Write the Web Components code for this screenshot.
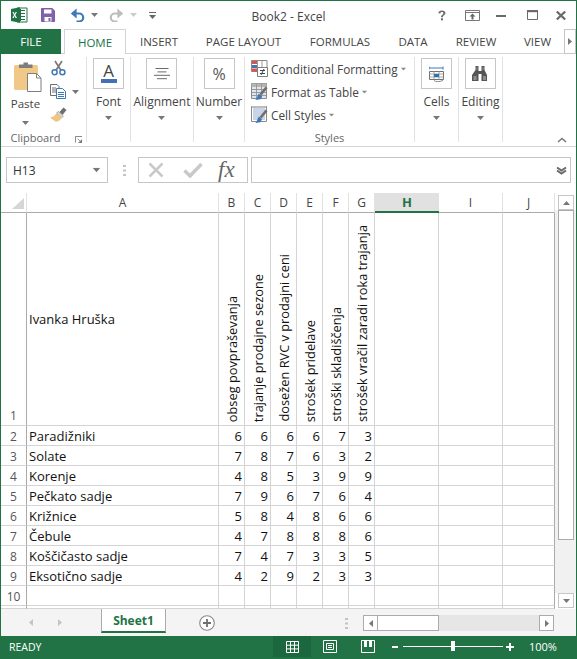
<!DOCTYPE html>
<html>
<head>
<meta charset="utf-8">
<title>Book2 - Excel</title>
<style>
  html, body { margin: 0; padding: 0; background: #fff; }
</style>
</head>
<body>
<xl-window>
  <xl-titlebar title="Book2 - Excel"></xl-titlebar>
  <xl-tabs></xl-tabs>
  <xl-ribbon></xl-ribbon>
  <xl-formula-bar cell="H13"></xl-formula-bar>
  <xl-sheet></xl-sheet>
  <xl-sheet-tabs sheet="Sheet1"></xl-sheet-tabs>
  <xl-status text="READY" zoom="100%"></xl-status>
</xl-window>

<script>
const FONT = '"Open Sans", "Liberation Sans", sans-serif';
const GREEN = '#217346';

// [width, height, svg body, optional viewBox when the icon is drawn scaled]
const ICONS = {
  excel: [17, 16, `<path d="M6 1h10v14H6z" fill="#fff" stroke="#217346"/><path d="M10 3.5h4M10 6.5h4M10 9.5h4M10 12.5h4M9.5 2v12" stroke="#217346"/><path d="M0 2l9-1.8v15.6L0 14z" fill="#217346"/><path d="M2.6 5l1 2 1-2h1.3L4.3 8l1.7 3H4.6l-1-2-1 2H1.3L3 8 1.4 5z" fill="#fff"/>`],
  save: [14, 14, `<path d="M.5.5h10.7l2.3 2.3v10.7H.5z" fill="#8064a9" stroke="#7a5ea6"/><path d="M3 1.5h7.5v4H3z" fill="#fff"/><path d="M3.5 9h7v4.5h-7z" fill="#fff"/><path d="M7.5 10h2v3h-2z" fill="#8064a9"/>`],
  undo: [15, 14, `<path d="M2.5 5.5h6.7a4 4 0 0 1 0 8H6.5" fill="none" stroke="#3f79b9" stroke-width="2.2"/><path d="M6.6.6v9.8L0.8 5.5z" fill="#3f79b9"/>`],
  redo: [15, 14, `<path d="M12.5 5.5H5.8a4 4 0 0 0 0 8h2.7" fill="none" stroke="#bdbdbd" stroke-width="2.2"/><path d="M8.4.6v9.8l5.8-4.9z" fill="#bdbdbd"/>`],
  qat: [7, 9, `<path d="M0 1.5h7" stroke="#666"/><path d="M0 4h7L3.5 8z" fill="#666"/>`],
  caret: [7, 4, `<path d="M0 0h7L3.5 4z" fill="currentColor"/>`],
  help: [8, 11, `<path d="M1.500 4.200C1.500 2.200 3.200 1 5.600 1c2.600 0 4.200 1.200 4.200 3.100 0 2.600-3 2.500-3 5H4.600c0-3.100 2.800-3 2.800-4.900 0-.9-.7-1.400-1.800-1.400-1.200 0-1.800.7-1.800 1.700z" fill="#6a6a6a"/><rect x="4.500" y="10.300" width="2.400" height="2.500" fill="#6a6a6a"/>`, '1 1 9.500 12'],
  display: [15, 11, `<path d="M.5.500h14v10H.5z" fill="#fff" stroke="#777"/><path d="M1 2.500h13" stroke="#777"/><path d="M7.500 3.500l3 3H8.500v3h-2v-3h-2z" fill="#666"/>`],
  min: [10, 3, `<rect width="10" height="2" y="1" fill="#6a6a6a"/>`],
  max: [11, 10, `<path d="M.5.500h10v9H.5z" fill="none" stroke="#6a6a6a"/><path d="M0 0h11v2.200H0z" fill="#6a6a6a"/>`],
  close: [10, 9, `<path d="M.800.500l8.400 8M9.200.500L.800 8.500" stroke="#6a6a6a" stroke-width="2.200"/>`],
  right: [4, 7, `<path d="M0 0l4 3.500L0 7z" fill="currentColor"/>`],
  left: [4, 7, `<path d="M4 0L0 3.500 4 7z" fill="currentColor"/>`],
  paste: [29, 31, `<rect x="1" y="4" width="24" height="25" rx="1.500" fill="#f0c988"/><path d="M6 7V3.500h4.500V1.500h4.500v2h4.500V7z" fill="#7d7d7d"/><path d="M14.500 12.500h9l4.500 4.500v13.500H14.500z" fill="#fff" stroke="#7f7f7f"/><path d="M23.500 12.500V17H28" fill="none" stroke="#7f7f7f"/>`],
  cut: [15, 16, `<path d="M4 1l5.800 9M11 1L5.200 10" stroke="#7a7a7a" stroke-width="1.700"/><circle cx="3.600" cy="12.300" r="2.500" fill="#fff" stroke="#3e78b8" stroke-width="1.500"/><circle cx="11.400" cy="12.300" r="2.500" fill="#fff" stroke="#3e78b8" stroke-width="1.500"/>`],
  copy: [16, 15, `<path d="M.5.500h6.500l2 2v9H.500z" fill="#fff" stroke="#6f6f6f"/><path d="M2 4h4M2 6h4M2 8h4" stroke="#6f6f6f"/><path d="M6.500 4.500h6l3 3v7h-9z" fill="#fff" stroke="#3e78b8"/><path d="M8 8.500h6M8 10.500h6M8 12.500h6" stroke="#3e78b8"/>`],
  brush: [17, 15, `<path d="M9.500 5l4-4.500 3 2.500-4 5z" fill="#6f6f6f"/><path d="M8.200 4.300l5.200 4.700-1.500 1.800-5.300-4.700z" fill="#d9d9d9" stroke="#8a8a8a" stroke-width=".6"/><path d="M6.600 6l5.300 4.800c-1.500 2.500-4 3.900-6.200 3.900L0 10.500C2.700 10.300 5 8.600 6.600 6z" fill="#efc580"/>`],
  launcher: [7, 7, `<path d="M.5 3V.5H7M.5.500v6" fill="none" stroke="#8a8a8a"/><path d="M7 7H3.500L7 3.500z M2.500 2.500L5 5" fill="#777" stroke="#777" stroke-width=".7"/>`],
  align: [16, 12, `<path d="M1.500.500h13M3.500 3.900h9M0 7.300h16M3 10.700h10" stroke="#6a6a6a"/>`],
  cond: [17, 17, `<path d="M.500.500h15.500v11H.500z" fill="#fff" stroke="#8a8a8a"/><path d="M1 1h5v3H1z" fill="#d9534f"/><path d="M1 5h5v3H1z" fill="#3e78b8"/><path d="M1 8.500h5v3H1z" fill="#d9534f"/><path d="M6.500 1v10.500M11 1v10" stroke="#9a9a9a"/><path d="M6.500 7.500h10v9h-10z" fill="#fff" stroke="#7f7f7f"/><path d="M9 10.500h5M9 13.500h5M13 9l-3 6" stroke="#444"/>`],
  format: [17, 17, `<path d="M.500.500h15v15H.500z" fill="#fff" stroke="#8a8a8a"/><path d="M.500.500h15v3.500H.500z" fill="#b5b5b5"/><path d="M1 4h14v11H1z" fill="#dfe6f0"/><path d="M5.500 1v14M10.500 1v14M1 6.500h14M1 9.500h14M1 12.500h14" stroke="#9a9a9a"/><path d="M8.500 11l6-7.500 2 1.700-6 7.300z" fill="#6f6f6f"/><path d="M7.800 10.500l3.200 3-1.600 2.800-5 .700c1.900-2 2-4.300 3.400-6.500z" fill="#3e78b8"/>`],
  styles: [17, 17, `<path d="M.500.500h15v15H.500z" fill="#fff" stroke="#8a8a8a"/><path d="M2 2h12v12H2z" fill="#c9d5e6"/><path d="M1 1h14" stroke="#bdbdbd" stroke-width="2"/><path d="M8.500 11l6-7.500 2 1.700-6 7.300z" fill="#6f6f6f"/><path d="M7.800 10.500l3.200 3-1.600 2.800-5 .700c1.900-2 2-4.300 3.400-6.500z" fill="#3e78b8"/>`],
  cells: [16, 16, `<path d="M0 .5v3M14 .5v3M0 2h14" stroke="#3e78b8"/><path d="M.500 5.500h14v8H.500z" fill="#fff" stroke="#6f6f6f"/><path d="M5 5.500v8M10 5.500v8M.500 8h14M.500 11h14" stroke="#a5a5a5"/><rect x="5" y="8" width="5" height="3" fill="#2b6fb5"/><path d="M5 14.500c2 1.500 5 1.500 9 0" fill="none" stroke="#8a8a8a"/>`],
  find: [16, 15, `<path d="M3.500 0h3v5h3V0h3v4l2.500 5v6H9.500V8h-3v7H0V9l3.500-5z" fill="#555"/><path d="M1.500 10h3v4h-3zM11 10h3v4h-3z" fill="#8d8d8d"/><path d="M4.500 1h1v3h-1zM10.500 1h1v3h-1z" fill="#8d8d8d"/>`],
  cancel: [16, 16, `<path d="M1.500 1.500l13 13M14.500 1.500l-13 13" stroke="#c9c9c9" stroke-width="2.500"/>`],
  enter: [20, 16, `<path d="M1.500 8.500l5.500 5.500L18.500 2" fill="none" stroke="#c9c9c9" stroke-width="3.500"/>`],
  chevrons: [11, 9, `<path d="M1 1.500l4.500 3 4.500-3M1 4.500l4.500 3 4.500-3" fill="none" stroke="#6a6a6a" stroke-width="2"/>`],
  plus: [16, 16, `<circle cx="8" cy="8" r="7.300" fill="#fff" stroke="#8a8a8a" stroke-width="1.100"/><path d="M8 4v8M4 8h8" stroke="#6f6f6f" stroke-width="1.800"/>`],
  dots: [3, 11, `<path d="M0 0h3v2H0zM0 4.500h3v2H0zM0 9h3v2H0z" fill="#c4c4c4"/>`],
  collapse: [10, 6, `<path d="M1 5l4-3.500L9 5" fill="none" stroke="#777" stroke-width="1.500"/>`],
  normal: [13, 12, `<path d="M.5.500h12v11H.5zM.5 4.200h12M.5 7.900h12M4.500.500v11M8.500.500v11" fill="none" stroke="#fff"/>`],
  layout: [14, 13, `<path d="M.5.500h13v12H.5z" fill="none" stroke="#fff"/><path d="M3.500 3.500h7v6h-7zM5 5.500h4M5 7.500h4" fill="none" stroke="#fff"/>`],
  breaks: [14, 13, `<path d="M.5.500h13v12H.5z" fill="none" stroke="#fff"/><path d="M3 0h3v7H3zM8 0h3v7H8z" fill="#fff"/>`],
  minus: [6, 2, `<rect width="6" height="2" fill="#fff"/>`],
  zplus: [8, 8, `<path d="M0 3h8v2H0zM3 0h2v8H3z" fill="#fff"/>`]
};

class XlIcon extends HTMLElement {
  connectedCallback() {
    const [w, h, body, vb] = ICONS[this.getAttribute('name')];
    this.attachShadow({ mode: 'open' }).innerHTML = `
      <style>:host { display: block; flex: none; line-height: 0; } svg { display: block; }</style>
      <svg width="${w}" height="${h}" viewBox="${vb || `0 0 ${w} ${h}`}">${body}</svg>`;
  }
}

class XlWindow extends HTMLElement {
  connectedCallback() {
    this.attachShadow({ mode: 'open' }).innerHTML = `
      <style>
        :host {
          display: flex; flex-direction: column;
          width: 577px; height: 659px; box-sizing: border-box;
          border: 1px solid ${GREEN}; border-bottom: none;
          font-family: ${FONT}; color: #444; background: #fff; overflow: hidden;
        }
      </style>
      <slot></slot>`;
  }
}

class XlTitlebar extends HTMLElement {
  connectedCallback() {
    this.attachShadow({ mode: 'open' }).innerHTML = `
      <style>
        :host { display: grid; grid-template-columns: 1fr auto 1fr; align-items: center; height: 28px; flex: none; }
        .left, .right { display: flex; align-items: center; }
        .left { padding-left: 10px; }
        .right { justify-content: flex-end; }
        .title { font-size: 12px; color: #444; margin-top: 2px; }
        .caret { color: #777; }
      </style>
      <div class="left">
        <xl-icon name="excel"></xl-icon>
        <xl-icon name="save" style="margin-left:13px"></xl-icon>
        <xl-icon name="undo" style="margin-left:15px"></xl-icon>
        <xl-icon class="caret" name="caret" style="margin-left:6px"></xl-icon>
        <xl-icon name="redo" style="margin-left:11px"></xl-icon>
        <xl-icon class="caret" name="caret" style="margin-left:6px;color:#ccc"></xl-icon>
        <xl-icon name="qat" style="margin-left:12px"></xl-icon>
      </div>
      <div class="title">${this.getAttribute('title')}</div>
      <div class="right">
        <xl-icon name="help"></xl-icon>
        <xl-icon name="display" style="margin-left:19px"></xl-icon>
        <xl-icon name="min" style="margin-left:16px"></xl-icon>
        <xl-icon name="max" style="margin-left:21px"></xl-icon>
        <xl-icon name="close" style="margin-left:18px;margin-right:10px"></xl-icon>
      </div>`;
  }
}

class XlTabs extends HTMLElement {
  connectedCallback() {
    const tabs = [['INSERT', 66], ['PAGE LAYOUT', 103], ['FORMULAS', 90], ['DATA', 56], ['REVIEW', 70], ['VIEW', 53]];
    this.attachShadow({ mode: 'open' }).innerHTML = `
      <style>
        :host {
          display: flex; height: 25px; flex: none; box-sizing: border-box;
          border-bottom: 1px solid #d4d4d4; font-size: 11.5px; color: #444;
        }
        div { display: flex; align-items: center; justify-content: center; box-sizing: border-box; height: 24px; white-space: nowrap; }
        .file { width: 60px; background: ${GREEN}; color: #fff; height: 25px; margin-bottom: -1px; margin-right: 3px; }
        .home {
          width: 62px; height: 25px; color: ${GREEN}; background: #fff; position: relative;
          border: 1px solid #d4d4d4; border-bottom: none;
        }
        .more {
          width: 12px; height: 25px; border: 1px solid #c6c6c6; color: #777;
        }
      </style>
      <div class="file">FILE</div>
      <div class="home">HOME</div>
      ${tabs.map(([t, w]) => `<div style="width:${w}px">${t}</div>`).join('')}
      <div class="more"><xl-icon name="right"></xl-icon></div>`;
  }
}

class XlGroup extends HTMLElement {
  connectedCallback() {
    const label = this.getAttribute('label');
    const launcher = this.hasAttribute('launcher');
    this.attachShadow({ mode: 'open' }).innerHTML = `
      <style>
        :host {
          display: flex; flex-direction: column; flex: none; box-sizing: border-box;
          height: 85px; margin-top: 3px; border-right: 1px solid #e2e2e2;
          position: relative;
        }
        .body { height: 72px; padding-top: 1px; flex: none; }
        .label { font-size: 11px; color: #666; text-align: center; line-height: 15px; flex: none; }
        .label.l { padding-right: 16px; }
        xl-icon { position: absolute; right: 4px; bottom: -1px; }
      </style>
      <div class="body"><slot></slot></div>
      <div class="label${launcher ? ' l' : ''}">${label || ''}</div>
      ${launcher ? '<xl-icon name="launcher"></xl-icon>' : ''}`;
  }
}

class XlBigButton extends HTMLElement {
  connectedCallback() {
    this.attachShadow({ mode: 'open' }).innerHTML = `
      <style>
        :host {
          display: flex; flex-direction: column; align-items: center;
          font-size: 12px; color: #444; white-space: nowrap;
        }
        .box {
          width: 31px; height: 31px; box-sizing: border-box; border: 1px solid #c6c6c6;
          display: flex; align-items: center; justify-content: center;
        }
        .text { line-height: 16px; margin-top: 5px; }
        xl-icon { margin-top: 6px; color: #777; }
      </style>
      <div class="box"><slot></slot></div>
      <div class="text">${this.getAttribute('label')}</div>
      <xl-icon name="caret"></xl-icon>`;
  }
}

class XlStyleRow extends HTMLElement {
  connectedCallback() {
    this.attachShadow({ mode: 'open' }).innerHTML = `
      <style>
        :host { display: flex; align-items: center; height: 23px; font-size: 11.8px; color: #444; white-space: nowrap; }
        .t { margin-left: 3px; }
        xl-icon.c { margin-left: 2px; color: #888; transform: scale(.8); }
      </style>
      <xl-icon name="${this.getAttribute('icon')}"></xl-icon>
      <span class="t">${this.getAttribute('label')}</span>
      <xl-icon class="c" name="caret"></xl-icon>`;
  }
}

class XlRibbon extends HTMLElement {
  connectedCallback() {
    this.attachShadow({ mode: 'open' }).innerHTML = `
      <style>
        :host {
          display: flex; height: 93px; flex: none; box-sizing: border-box;
          border-bottom: 1px solid #d4d4d4; position: relative;
        }
        .clip { display: flex; }
        .paste {
          width: 49px; display: flex; flex-direction: column; align-items: center;
          font-size: 11.5px; color: #444;
        }
        .paste span { line-height: 16px; margin-top: 4px; }
        .paste .c { margin-top: 9px; color: #777; }
        .small { display: flex; flex-direction: column; }
        .a { font-size: 17px; line-height: 17px; color: #444; margin-top: -2px; }
        .bar { width: 16px; height: 4px; background: #4472b0; margin-top: 0; }
        .pct { font-size: 16px; color: #555; }
        .big { display: flex; justify-content: center; }
        .rows { padding: 0 0 0 6px; margin-top: -1px; }
        .collapse { position: absolute; right: 9px; bottom: 3px; }
      </style>
      <xl-group label="Clipboard" launcher style="width:86px">
        <div class="clip">
          <div class="paste">
            <xl-icon name="paste" style="margin-top:3px;margin-left:4px"></xl-icon>
            <span>Paste</span>
            <xl-icon class="c" name="caret"></xl-icon>
          </div>
          <div class="small">
            <xl-icon name="cut" style="margin-top:2px;margin-left:1px"></xl-icon>
            <div style="display:flex;align-items:center;margin-top:8px">
              <xl-icon name="copy"></xl-icon>
              <xl-icon name="caret" style="margin-left:6px;color:#777"></xl-icon>
            </div>
            <xl-icon name="brush" style="margin-top:8px"></xl-icon>
          </div>
        </div>
      </xl-group>
      <xl-group style="width:44px"><div class="big">
        <xl-big-button label="Font"><div style="display:flex;flex-direction:column;align-items:center"><span class="a">A</span><div class="bar"></div></div></xl-big-button>
      </div></xl-group>
      <xl-group style="width:63px"><div class="big">
        <xl-big-button label="Alignment"><xl-icon name="align"></xl-icon></xl-big-button>
      </div></xl-group>
      <xl-group style="width:51px"><div class="big">
        <xl-big-button label="Number"><span class="pct">%</span></xl-big-button>
      </div></xl-group>
      <xl-group label="Styles" style="width:170px">
        <div class="rows">
          <xl-style-row icon="cond" label="Conditional Formatting"></xl-style-row>
          <xl-style-row icon="format" label="Format as Table"></xl-style-row>
          <xl-style-row icon="styles" label="Cell Styles"></xl-style-row>
        </div>
      </xl-group>
      <xl-group style="width:44px"><div class="big">
        <xl-big-button label="Cells"><xl-icon name="cells"></xl-icon></xl-big-button>
      </div></xl-group>
      <xl-group style="width:44px"><div class="big">
        <xl-big-button label="Editing"><xl-icon name="find"></xl-icon></xl-big-button>
      </div></xl-group>
      <xl-icon class="collapse" name="collapse"></xl-icon>`;
  }
}

class XlFormulaBar extends HTMLElement {
  connectedCallback() {
    this.attachShadow({ mode: 'open' }).innerHTML = `
      <style>
        :host {
          display: flex; align-items: center; height: 46px; flex: none; box-sizing: border-box;
          padding: 0 5px 0 5px; font-size: 12px; color: #333;
        }
        .box { box-sizing: border-box; height: 26px; border: 1px solid #c6c6c6; display: flex; align-items: center; }
        .name { width: 102px; padding: 0 7px 0 6px; justify-content: space-between; }
        .name xl-icon { color: #777; }
        .fx { width: 110px; margin-left: 12px; }
        .fn {
          font: italic 23px "Liberation Serif", serif; color: #666; margin-left: 15px; line-height: 20px;
        }
        .input { flex: 1; margin-left: 3px; justify-content: flex-end; padding-right: 3px; }
      </style>
      <div class="box name"><span>${this.getAttribute('cell')}</span><xl-icon name="caret" style="transform:scale(1.1)"></xl-icon></div>
      <xl-icon name="dots" style="margin-left:15px"></xl-icon>
      <div class="box fx">
        <xl-icon name="cancel" style="margin-left:9px"></xl-icon>
        <xl-icon name="enter" style="margin-left:19px"></xl-icon>
        <span class="fn">fx</span>
      </div>
      <div class="box input"><xl-icon name="chevrons"></xl-icon></div>`;
  }
}

class XlGrid extends HTMLElement {
  connectedCallback() {
    const cols = ['A', 'B', 'C', 'D', 'E', 'F', 'G', 'H', 'I', 'J'];
    const heads = ['obseg povpraševanja', 'trajanje prodajne sezone', 'dosežen RVC v prodajni ceni', 'strošek pridelave', 'stroški skladiščenja', 'strošek vračil zaradi roka trajanja'];
    const rows = [
      ['Paradižniki', 6, 6, 6, 6, 7, 3],
      ['Solate', 7, 8, 7, 6, 3, 2],
      ['Korenje', 4, 8, 5, 3, 9, 9],
      ['Pečkato sadje', 7, 9, 6, 7, 6, 4],
      ['Križnice', 5, 8, 4, 8, 6, 6],
      ['Čebule', 4, 7, 8, 8, 8, 6],
      ['Koščičasto sadje', 7, 4, 7, 3, 3, 5],
      ['Eksotično sadje', 4, 2, 9, 2, 3, 3]
    ];
    // empty cells up to the end of a row; the last one closes the grid on the right
    const blank = n => '<div class="c"></div>'.repeat(n - 1) + '<div class="c end"></div>';
    let html = `<div class="ch corner"><b></b></div>`;
    html += cols.map(c => `<div class="ch${c === 'H' ? ' sel' : ''}">${c}</div>`).join('');
    html += `<div class="rh r1">1</div><div class="c name">Ivanka Hruška</div>`;
    html += heads.map(h => `<div class="c vert"><span>${h}</span></div>`).join('') + blank(3);
    rows.forEach((r, i) => {
      html += `<div class="rh">${i + 2}</div><div class="c txt">${r[0]}</div>`;
      html += r.slice(1).map(v => `<div class="c num">${v}</div>`).join('') + blank(3);
    });
    html += `<div class="rh">10</div>` + blank(10);
    html += `<div class="rh"></div>` + blank(10);
    this.attachShadow({ mode: 'open' }).innerHTML = `
      <style>
        :host {
          display: grid; flex: none; width: 554px; height: 416px; box-sizing: border-box;
          grid-template-columns: 26px 192px repeat(6, 26px) 64px 64px 52px;
          grid-template-rows: 20px 213px repeat(9, 20px) 3px;
          font-size: 13px; color: #111; border-bottom: 1px solid #ababab;
        }
        div { box-sizing: border-box; overflow: hidden; white-space: nowrap; }
        .ch {
          display: flex; align-items: center; justify-content: center; color: #444; font-size: 12px;
          border-bottom: 1px solid #ababab; border-right: 1px solid #e2e2e2;
        }
        .corner { justify-content: flex-end; align-items: flex-end; padding: 0 2px 3px 0; border-right: 1px solid #e2e2e2; }
        .corner b {
          display: block; width: 0; height: 0;
          border-left: 12px solid transparent; border-bottom: 11px solid #d6d6d6;
        }
        .sel { background: #e1e1e1; color: ${GREEN}; font-weight: 700; font-size: 13px; border-bottom: 2px solid ${GREEN}; border-right: none; }
        .rh {
          display: flex; align-items: center; justify-content: center; color: #555; font-size: 12px;
          border-right: 1px solid #ababab; border-bottom: 1px solid #d4d4d4; padding-top: 1px;
        }
        .r1 { align-items: flex-end; line-height: 18px; }
        .c { border-right: 1px solid #d4d4d4; border-bottom: 1px solid #d4d4d4; display: flex; align-items: center; padding-top: 1px; }
        .c.end { border-right-color: #ababab; }
        .txt { padding-left: 2px; }
        .name { padding: 0 0 0 2px; }
        .num { justify-content: flex-end; padding-right: 2px; }
        .vert { align-items: flex-end; justify-content: center; padding: 0 0 3px 1px; font-size: 12.8px; }
        .vert span { writing-mode: vertical-rl; transform: rotate(180deg); line-height: 17px; }
      </style>
      ${html}`;
  }
}

class XlScrollV extends HTMLElement {
  connectedCallback() {
    this.attachShadow({ mode: 'open' }).innerHTML = `
      <style>
        :host {
          display: flex; flex-direction: column; flex: none; width: 20px; height: 416px;
          box-sizing: border-box; padding: 2px 1px 0 3px; color: #777;
        }
        .btn {
          width: 16px; height: 15px; box-sizing: border-box; border: 1px solid #c6c6c6; background: #fff;
          display: flex; align-items: center; justify-content: center; flex: none;
        }
        .track { flex: 1; background: #f1f1f1; margin: 0 -3px 0 -3px; padding: 0 3px; display: flex; flex-direction: column; }
        .thumb { height: 330px; width: 16px; box-sizing: border-box; border: 1px solid #ababab; background: #fff; }
        .down { margin-bottom: 1px; }
      </style>
      <div class="btn"><xl-icon name="caret" style="transform:rotate(180deg)"></xl-icon></div>
      <div class="track"><div class="thumb"></div></div>
      <div class="btn down"><xl-icon name="caret"></xl-icon></div>`;
  }
}

class XlSheet extends HTMLElement {
  connectedCallback() {
    this.attachShadow({ mode: 'open' }).innerHTML = `
      <style>:host { display: flex; flex: none; height: 416px; }</style>
      <xl-grid></xl-grid>
      <xl-scroll-v></xl-scroll-v>`;
  }
}

class XlSheetTabs extends HTMLElement {
  connectedCallback() {
    this.attachShadow({ mode: 'open' }).innerHTML = `
      <style>
        :host {
          display: flex; align-items: flex-start; height: 27px; flex: none;
          background: #f4f4f4; color: #c4c4c4; position: relative;
        }
        .nav { margin-top: 10px; }
        .tab {
          box-sizing: border-box; width: 65px; height: 24px; background: #fff; margin-left: 39px;
          border-left: 1px solid #ababab; border-right: 1px solid #ababab; border-bottom: 2px solid ${GREEN};
          color: ${GREEN}; font-weight: 700; font-size: 12px; text-align: center; line-height: 24px;
        }
        .hs {
          display: flex; height: 16px; width: 191px; margin-left: 15px; margin-top: 6px; box-sizing: border-box;
          background: #e6e6e6; color: #777;
        }
        .b {
          width: 15px; height: 16px; box-sizing: border-box; border: 1px solid #ababab; background: #fff;
          display: flex; align-items: center; justify-content: center; flex: none;
        }
        .t { width: 61px; height: 16px; box-sizing: border-box; border: 1px solid #ababab; border-left: none; background: #fff; flex: none; }
        .sp { flex: 1; }
      </style>
      <xl-icon class="nav" name="left" style="margin-left:28px"></xl-icon>
      <xl-icon class="nav" name="right" style="margin-left:25px"></xl-icon>
      <div class="tab">${this.getAttribute('sheet')}</div>
      <xl-icon name="plus" style="margin-left:33px;margin-top:6px"></xl-icon>
      <xl-icon name="dots" style="margin-left:130px;margin-top:9px"></xl-icon>
      <div class="hs">
        <div class="b"><xl-icon name="left"></xl-icon></div>
        <div class="t"></div>
        <div class="sp"></div>
        <div class="b"><xl-icon name="right"></xl-icon></div>
      </div>`;
  }
}

class XlStatus extends HTMLElement {
  connectedCallback() {
    this.attachShadow({ mode: 'open' }).innerHTML = `
      <style>
        :host {
          display: flex; align-items: center; flex: 1; background: ${GREEN}; color: #fff; font-size: 10.5px;
          padding-bottom: 2px;
        }
        .text { width: 272px; padding-left: 8px; box-sizing: border-box; }
        .view { width: 38px; height: 21px; background: #1c683e; display: flex; align-items: center; justify-content: center; }
        .line { width: 100px; height: 1px; background: #fff; margin-left: 5px; position: relative; }
        .line i { position: absolute; left: 48px; top: -5px; width: 4px; height: 10px; background: #fff; }
        .pct { margin-left: 15px; font-size: 11px; }
      </style>
      <div class="text">${this.getAttribute('text')}</div>
      <div class="view"><xl-icon name="normal"></xl-icon></div>
      <xl-icon name="layout" style="margin-left:12px"></xl-icon>
      <xl-icon name="breaks" style="margin-left:24px"></xl-icon>
      <xl-icon name="minus" style="margin-left:17px"></xl-icon>
      <div class="line"><i></i></div>
      <xl-icon name="zplus" style="margin-left:3px"></xl-icon>
      <div class="pct">${this.getAttribute('zoom')}</div>`;
  }
}

customElements.define('xl-icon', XlIcon);
customElements.define('xl-window', XlWindow);
customElements.define('xl-titlebar', XlTitlebar);
customElements.define('xl-tabs', XlTabs);
customElements.define('xl-group', XlGroup);
customElements.define('xl-big-button', XlBigButton);
customElements.define('xl-style-row', XlStyleRow);
customElements.define('xl-ribbon', XlRibbon);
customElements.define('xl-formula-bar', XlFormulaBar);
customElements.define('xl-grid', XlGrid);
customElements.define('xl-scroll-v', XlScrollV);
customElements.define('xl-sheet', XlSheet);
customElements.define('xl-sheet-tabs', XlSheetTabs);
customElements.define('xl-status', XlStatus);
</script>
</body>
</html>
